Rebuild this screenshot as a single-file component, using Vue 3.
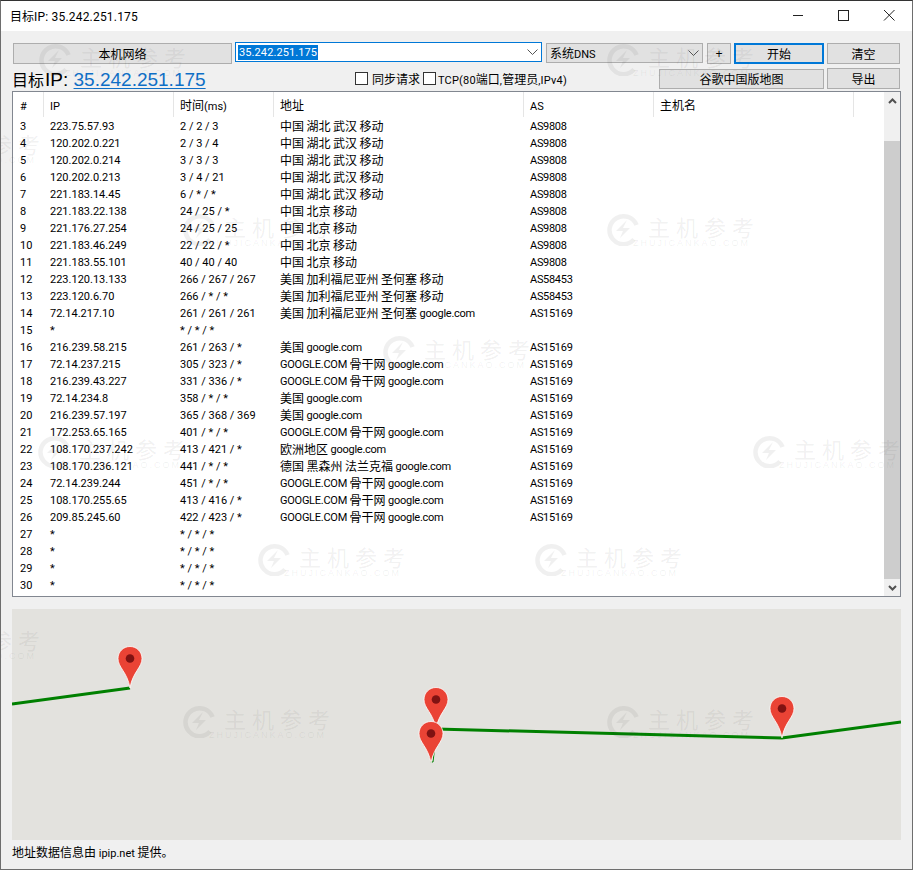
<template>
  <div class="win">
    <!-- タイトルバー -->
    <div class="titlebar">
      <span class="title"><span v-for="(s, i) in segs('目标IP: 35.242.251.175')" :key="i" :class="s.cls">{{ s.text }}</span></span>
      <div class="winbtns">
        <svg width="45" height="30" viewBox="0 0 45 30"><path d="M16 14.500h10" stroke="#222" fill="none" /></svg>
        <svg width="45" height="30" viewBox="0 0 45 30"><rect x="16.500" y="9.500" width="10" height="10" stroke="#222" fill="none" /></svg>
        <svg width="45" height="30" viewBox="0 0 45 30"><path d="M17 9l10.500 10.500M27.500 9L17 19.500" stroke="#222" fill="none" /></svg>
      </div>
    </div>

    <div class="body">
      <div class="row1">
        <button class="btn local">本机网络</button>
        <div class="ipbox">
          <span class="sel lat">35.242.251.175</span>
          <svg class="chev" width="11" height="6" viewBox="0 0 11 6"><path d="M.5.5l5 5 5-5" stroke="#555" fill="none" /></svg>
        </div>
        <div class="combo">
          <span class="combo-text"><span class="cjk">系统</span><span class="lat">DNS</span></span>
          <svg class="chev" width="11" height="6" viewBox="0 0 11 6"><path d="M.5.5l5 5 5-5" stroke="#555" fill="none" /></svg>
        </div>
        <button class="btn plus">+</button>
        <button class="btn start">开始</button>
        <button class="btn side">清空</button>
      </div>

      <div class="row2">
        <div class="bigip">
          <span class="big-cjk">目标</span><span class="big-lat">IP: </span><a class="big-lat link">35.242.251.175</a>
        </div>
        <label class="chk sync"><i class="box"></i>同步请求</label>
        <label class="chk tcp"><i class="box"></i><span><span v-for="(s, i) in segs('TCP(80端口,管理员,IPv4)')" :key="i" :class="s.cls">{{ s.text }}</span></span></label>
        <button class="btn gmap">谷歌中国版地图</button>
        <button class="btn side">导出</button>
      </div>

      <div class="list">
        <div class="table">
          <div class="thead">
            <div v-for="h in heads" :key="h" class="th"><span v-for="(s, i) in segs(h)" :key="i" :class="s.cls">{{ s.text }}</span></div>
          </div>
          <div v-for="r in rows" :key="r[0]" class="tr">
            <div class="td lat">{{ r[0] }}</div>
            <div class="td lat">{{ r[1] }}</div>
            <div class="td lat">{{ r[2] }}</div>
            <div class="td addr"><span v-for="(s, i) in segs(r[3])" :key="i" :class="s.cls">{{ s.text }}</span></div>
            <div class="td lat asn">{{ r[4] }}</div>
          </div>
        </div>
        <div class="scroll">
          <div class="arrow"><svg width="9" height="6" viewBox="0 0 9 6"><path d="M1 5l3.500-3.500L8 5" stroke="#505050" stroke-width="2" fill="none" /></svg></div>
          <div class="track"><div class="thumb"></div></div>
          <div class="arrow"><svg width="9" height="6" viewBox="0 0 9 6"><path d="M1 1l3.500 3.500L8 1" stroke="#505050" stroke-width="2" fill="none" /></svg></div>
        </div>
      </div>

      <div class="map">
        <svg width="889" height="231" viewBox="12 609 889 231">
          <g fill="none" stroke="#008000">
            <path d="M12 704L130 688" stroke-width="3" />
            <path d="M436 729L782 738L901 722" stroke-width="3" />
            <path d="M435 745L433 762H430" stroke-width="1" />
          </g>
          <g v-for="p in pins" :key="p[0]" :transform="`translate(${p[0] - 12.5} ${p[1] - 42})`">
            <path d="M12.500.5C5.800.5.5 5.800.5 12.500c0 9 9.300 13.500 12 29.500 2.700-16 12-20.500 12-29.500C24.500 5.800 19.200.5 12.500.5z" fill="#ea4335" stroke="#fff" stroke-width=".8" />
            <circle cx="12.500" cy="12.500" r="4.300" fill="#7f1212" />
          </g>
        </svg>
      </div>

      <div class="foot"><span v-for="(s, i) in segs('地址数据信息由 ipip.net 提供。')" :key="i" :class="s.cls">{{ s.text }}</span></div>
    </div>

    <!-- 透かし -->
    <div v-for="w in marks" :key="w.join()" class="mark" :style="{ left: w[0] + 'px', top: w[1] + 'px' }">
      <svg width="33" height="33" viewBox="0 0 33 33">
        <path d="M27 26.500A14 14 0 1 1 29.500 12" fill="none" stroke="currentColor" stroke-width="4.500" />
        <path d="M20 7L9 18h7l-3 7 10-10h-7z" fill="currentColor" />
      </svg>
      <div class="mark-text">
        <div class="mark-cn">主机参考</div>
        <div class="mark-en">ZHUJICANKAO.COM</div>
      </div>
    </div>
  </div>
</template>

<script setup>
const heads = ['#', 'IP', '时间(ms)', '地址', 'AS', '主机名', '']

const HB = '中国 湖北 武汉 移动'
const BJ = '中国 北京 移动'
const SJ = '美国 加利福尼亚州 圣何塞'
const GG = 'GOOGLE.COM 骨干网 google.com'
const US = '美国 google.com'

const rows = [
  [3, '223.75.57.93', '2 / 2 / 3', HB, 'AS9808'],
  [4, '120.202.0.221', '2 / 3 / 4', HB, 'AS9808'],
  [5, '120.202.0.214', '3 / 3 / 3', HB, 'AS9808'],
  [6, '120.202.0.213', '3 / 4 / 21', HB, 'AS9808'],
  [7, '221.183.14.45', '6 / * / *', HB, 'AS9808'],
  [8, '221.183.22.138', '24 / 25 / *', BJ, 'AS9808'],
  [9, '221.176.27.254', '24 / 25 / 25', BJ, 'AS9808'],
  [10, '221.183.46.249', '22 / 22 / *', BJ, 'AS9808'],
  [11, '221.183.55.101', '40 / 40 / 40', BJ, 'AS9808'],
  [12, '223.120.13.133', '266 / 267 / 267', SJ + ' 移动', 'AS58453'],
  [13, '223.120.6.70', '266 / * / *', SJ + ' 移动', 'AS58453'],
  [14, '72.14.217.10', '261 / 261 / 261', SJ + ' google.com', 'AS15169'],
  [15, '*', '* / * / *', '', ''],
  [16, '216.239.58.215', '261 / 263 / *', US, 'AS15169'],
  [17, '72.14.237.215', '305 / 323 / *', GG, 'AS15169'],
  [18, '216.239.43.227', '331 / 336 / *', GG, 'AS15169'],
  [19, '72.14.234.8', '358 / * / *', US, 'AS15169'],
  [20, '216.239.57.197', '365 / 368 / 369', US, 'AS15169'],
  [21, '172.253.65.165', '401 / * / *', GG, 'AS15169'],
  [22, '108.170.237.242', '413 / 421 / *', '欧洲地区 google.com', 'AS15169'],
  [23, '108.170.236.121', '441 / * / *', '德国 黑森州 法兰克福 google.com', 'AS15169'],
  [24, '72.14.239.244', '451 / * / *', GG, 'AS15169'],
  [25, '108.170.255.65', '413 / 416 / *', GG, 'AS15169'],
  [26, '209.85.245.60', '422 / 423 / *', GG, 'AS15169'],
  [27, '*', '* / * / *', '', ''],
  [28, '*', '* / * / *', '', ''],
  [29, '*', '* / * / *', '', ''],
  [30, '*', '* / * / *', '', ''],
]

// ピンの先端座標
const pins = [[130, 688], [436, 729], [431, 763], [782, 738]]

const marks = [
  [39, 43], [607, 43], [-107, 130], [607, 213], [183, 213], [383, 335],
  [753, 435], [38, 435], [258, 543], [535, 543], [-107, 626], [183, 705], [607, 705],
]

// ASCII と漢字でフォントサイズが違うので分割する
function segs(text) {
  return (text.match(/[\x00-\x7f]+|[^\x00-\x7f]+/g) || []).map(t => ({
    text: t,
    cls: /^[\x00-\x7f]/.test(t) ? 'lat' : 'cjk',
  }))
}
</script>

<style scoped>
.win {
  position: relative;
  width: 913px;
  height: 870px;
  box-sizing: border-box;
  border: 1px solid #6e6e6e;
  border-top-color: #333;
  background: #f0f0f0;
  overflow: hidden;
  display: flex;
  flex-direction: column;
  font-family: "Noto Sans CJK SC", sans-serif;
  font-size: 12px;
  color: #000;
}

.cjk { font-family: "Noto Sans CJK SC", sans-serif; font-size: 12px; }
.lat { font-family: Roboto, sans-serif; font-size: 11px; }

.titlebar {
  height: 30px;
  flex-shrink: 0;
  background: #fff;
  display: flex;
  align-items: center;
  justify-content: space-between;
}
.title { margin: -2px 0 0 9px; }
.title .lat { font-size: 12px; letter-spacing: .2px; }
.winbtns { display: flex; }
.winbtns svg { display: block; }

.body {
  flex: 1;
  padding: 11px 11px 0;
  display: flex;
  flex-direction: column;
  min-height: 0;
}

.btn {
  box-sizing: border-box;
  height: 21px;
  padding: 0;
  border: 1px solid #adadad;
  background: #e1e1e1;
  font: 12px "Noto Sans CJK SC", sans-serif;
  color: #000;
  flex-shrink: 0;
}

.row1 {
  display: flex;
  align-items: flex-start;
  height: 21px;
  margin-left: 1px;
}
.local { width: 219px; margin-top: 1px; }
.ipbox {
  box-sizing: border-box;
  width: 307px;
  height: 20px;
  margin-left: 3px;
  border: 1px solid #0078d7;
  background: #fff;
  display: flex;
  align-items: center;
  justify-content: space-between;
  padding-left: 2px;
}
.sel { background: #0078d7; color: #fff; line-height: 15px; padding: 0 1px; letter-spacing: .1px; }
.chev { margin-right: 3px; }
.combo {
  box-sizing: border-box;
  width: 157px;
  height: 20px;
  margin: 1px 0 0 4px;
  border: 1px solid #adadad;
  background: #e1e1e1;
  display: flex;
  align-items: center;
  justify-content: space-between;
  padding-left: 3px;
}
.combo-text { margin-top: -2px; }
.plus { width: 24px; margin: 1px 0 0 4px; font-family: "Liberation Sans", sans-serif; }
.start { width: 90px; margin: 1px 0 0 3px; border: 2px solid #0078d7; }
.side { width: 73px; margin-left: 3px; margin-top: 1px; }

.row2 {
  display: flex;
  align-items: center;
  height: 21px;
  margin: 5px 0 0 1px;
}
.row2 .side { margin-top: 0; }
.bigip { width: 342px; white-space: nowrap; }
.big-cjk { font-size: 16px; margin: 0 1px 0 -1px; }
.big-lat { font-family: "Liberation Sans", sans-serif; font-size: 19px; }
.link { color: #0f6fc6; text-decoration: underline; text-underline-offset: 2px; text-decoration-thickness: 1px; }
.chk { display: flex; align-items: center; white-space: nowrap; }
.box {
  width: 11px;
  height: 11px;
  margin-right: 4px;
  border: 1px solid #333;
  background: #fff;
  flex-shrink: 0;
}
.chk.tcp .box { margin-right: 2px; }
.tcp .lat { letter-spacing: .2px; }
.sync { width: 68px; }
.tcp { width: 236px; }
.gmap { width: 165px; height: 20px; }

.list {
  box-sizing: border-box;
  height: 506px;
  margin-top: 2px;
  border: 1px solid #828790;
  background: #fff;
  display: flex;
  flex-shrink: 0;
}
.table { flex: 1; min-width: 0; }
.thead, .tr {
  display: grid;
  grid-template-columns: 30px 130px 100px 250px 130px 200px 31px;
}
.thead { height: 26px; align-items: start; }
.th {
  box-sizing: border-box;
  height: 25px;
  padding: 3px 0 0 6px;
  border-left: 1px solid #e5e5e5;
  line-height: 20px;
}
.th:first-child { border-left: 0; padding-left: 7px; }
.tr { height: 17px; line-height: 17px; }
.td { padding-left: 7px; white-space: nowrap; }
.addr { margin-top: -1px; }
.addr .lat { letter-spacing: -.25px; vertical-align: 1px; }
.asn { letter-spacing: -.3px; }

.scroll {
  width: 16px;
  flex-shrink: 0;
  background: #f0f0f0;
  display: flex;
  flex-direction: column;
}
.arrow {
  height: 17px;
  flex-shrink: 0;
  display: flex;
  align-items: center;
  justify-content: center;
}
.track { flex: 1; padding-top: 32px; box-sizing: border-box; min-height: 0; }
.thumb { height: 100%; background: #cdcdcd; }

.map {
  height: 231px;
  margin-top: 12px;
  background: #e3e2de;
  flex-shrink: 0;
}
.map svg { display: block; }

.foot { margin-top: 3px; line-height: 17px; }

.mark {
  position: absolute;
  pointer-events: none;
  display: flex;
  align-items: flex-start;
  gap: 8px;
  margin: -1px 0 0 -1px;
  color: rgba(60, 60, 60, 0.075);
}
.mark svg { flex-shrink: 0; }
.mark-cn {
  margin-top: 1px;
  font-family: "Noto Sans CJK SC", sans-serif;
  font-size: 22px;
  line-height: 24px;
  letter-spacing: 6px;
  white-space: nowrap;
}
.mark-en {
  margin: 0 0 0 -15px;
  font-family: "Liberation Sans", sans-serif;
  font-size: 9px;
  line-height: 10px;
  letter-spacing: 2px;
  white-space: nowrap;
}
</style>

<style>
html, body { margin: 0; background: #f0f0f0; }
</style>
